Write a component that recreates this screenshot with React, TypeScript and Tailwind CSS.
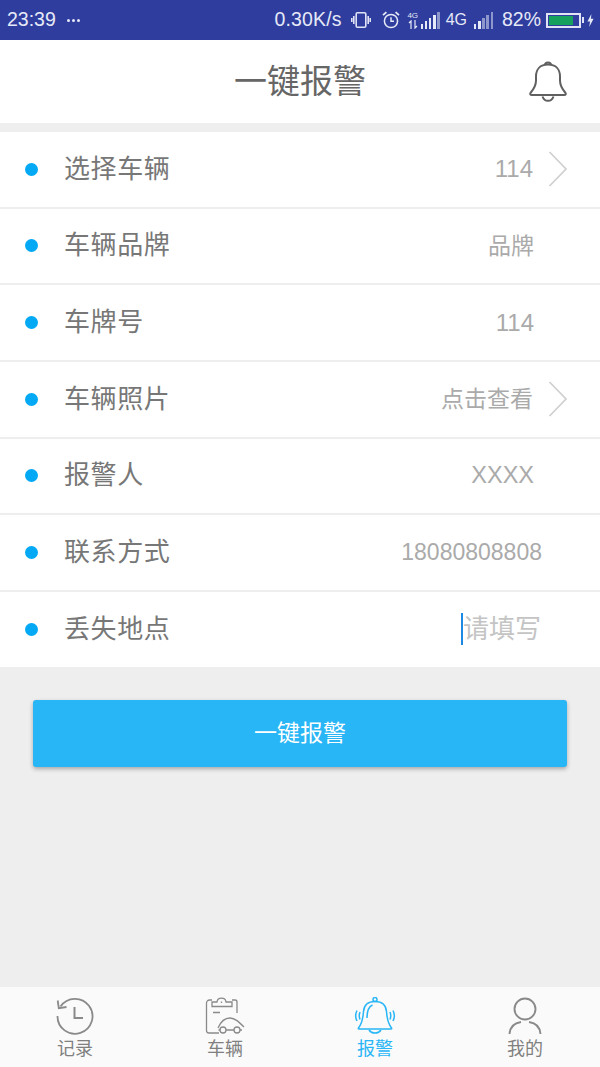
import type { ReactNode } from 'react';

const CJK = "font-['Liberation_Sans','Noto_Sans_CJK_SC',sans-serif]";

function VibrateIcon() {
  return (
    <svg width="20" height="16" viewBox="0 0 20 16" fill="none" stroke="#dfe3f5" strokeWidth="1.6">
      <rect x="5.2" y="0.8" width="9.6" height="14.4" rx="1.2" />
      <path d="M2.8 4v8M0.8 6v4M17.2 4v8M19.2 6v4" />
    </svg>
  );
}

function AlarmIcon() {
  return (
    <svg width="18" height="18" viewBox="0 0 18 18" fill="none" stroke="#e6e9f7" strokeWidth="1.5">
      <circle cx="9" cy="10" r="6.6" />
      <path d="M9 6.2v4h3" />
      <path d="M1 4.2 4.4 1.2M17 4.2 13.6 1.2" strokeWidth="1.8" />
    </svg>
  );
}

function Signal({ active }: { active: number }) {
  const bars = [5, 8, 11, 14, 17];
  return (
    <div className="flex items-end gap-[1.75px]">
      {bars.map((h, i) => (
        <div
          key={h}
          className={i < active ? 'w-[2.4px] bg-[#e6e9f7]' : 'w-[2.4px] bg-[#8d97cb]'}
          style={{ height: h }}
        />
      ))}
    </div>
  );
}

function StatusBar() {
  return (
    <div className="flex h-10 items-center bg-[#2f3e9e] pl-[7px] pr-[6px] font-['Liberation_Sans',sans-serif] text-[#e6e9f7]">
      <span className="text-[19.5px]">23:39</span>
      <span className="ml-[11px] flex gap-[2px]">
        <i className="size-[3px] rounded-full bg-[#e6e9f7]" />
        <i className="size-[3px] rounded-full bg-[#e6e9f7]" />
        <i className="size-[3px] rounded-full bg-[#e6e9f7]" />
      </span>
      <div className="ml-auto flex items-center">
        <span className="text-[19.5px] tracking-[0.15px]">0.30K/s</span>
        <span className="ml-[9px] flex"><VibrateIcon /></span>
        <span className="ml-[11px] flex"><AlarmIcon /></span>
        <div className="ml-[8px] flex w-[10px] flex-col items-center">
          <span className="text-[8px] leading-[9px]">4G</span>
          <svg width="10" height="9" viewBox="0 0 10 9" fill="none" stroke="#e6e9f7" strokeWidth="1.2">
            <path d="M3 9V1L1 3M7 0v8l2-2" />
          </svg>
        </div>
        <span className="ml-[3px]"><Signal active={4} /></span>
        <span className="ml-[6px] text-[16px]">4G</span>
        <span className="ml-[7px]"><Signal active={2} /></span>
        <span className="ml-[9px] text-[19.5px]">82%</span>
        <div className="ml-[5px] flex h-[15px] w-[35px] items-center border-2 border-[#dfe3f5] p-[1px]">
          <div className="h-full w-[82%] bg-[#16a05d]" />
        </div>
        <div className="ml-[1px] h-[6px] w-[2px] bg-[#dfe3f5]" />
        <svg className="ml-[3px]" width="7" height="15" viewBox="0 0 8 15" fill="#e6e9f7">
          <path d="M5 0 0.5 8.5h3L2.5 15 7.5 5.5h-3z" />
        </svg>
      </div>
    </div>
  );
}

function HeaderBell() {
  return (
    <svg width="40" height="42" viewBox="0 0 40 42" fill="none" stroke="#606060" strokeWidth="2" strokeLinejoin="round">
      <path d="M17 5c0-3.500 6-3.500 6 0" />
      <path d="M20 4.500c-8 0-12 5-12 12v4c0 5-1.800 8-5.200 12-1.200 1.300-.5 2.500 1 2.500h32.400c1.500 0 2.200-1.200 1-2.500-3.400-4-5.200-7-5.200-12v-4c0-7-4-12-12-12z" />
      <path d="M14.500 36.500c1 3 2.800 4.300 5.500 4.300s4.500-1.300 5.500-4.300" />
    </svg>
  );
}

function Chevron() {
  return (
    <svg width="20" height="36" viewBox="0 0 20 36" fill="none" stroke="#cfcfcf" strokeWidth="1.7">
      <path d="M1.500 1 18 18 1.500 35" />
    </svg>
  );
}

type RowData = { label: string; value: string; chevron?: boolean; pr: string; size: string };

const rows: RowData[] = [
  { label: '选择车辆', value: '114', chevron: true, pr: 'pr-[32px]', size: 'text-[24px]' },
  { label: '车辆品牌', value: '品牌', pr: 'pr-[66px]', size: 'text-[23px]' },
  { label: '车牌号', value: '114', pr: 'pr-[66px]', size: 'text-[24px]' },
  { label: '车辆照片', value: '点击查看', chevron: true, pr: 'pr-[32px]', size: 'text-[23px]' },
  { label: '报警人', value: 'XXXX', pr: 'pr-[66px]', size: 'text-[23.5px]' },
  { label: '联系方式', value: '18080808808', pr: 'pr-[58px]', size: 'text-[23px]' },
];

function Row({ label, right, last }: { label: string; right: ReactNode; last?: boolean }) {
  return (
    <div className={last ? 'flex h-[75px] items-center bg-white' : 'flex h-[76.67px] items-center border-b-2 border-[#eeeeee] bg-white'}>
      <div className="ml-[25px] size-[13px] rounded-full bg-[#03a9f4]" />
      <span className="ml-[26px] text-[26px] tracking-[0.6px] text-[#777777]">{label}</span>
      {right}
    </div>
  );
}

function HistoryIcon() {
  return (
    <svg width="38" height="38" viewBox="0 0 38 38" fill="none" stroke="#8a8a8a" strokeWidth="1.8">
      <path d="M4.500 9.500A17.500 17.500 0 1 1 1.500 19" />
      <path d="M1.700 3.500 2.800 11.200 10.500 10" />
      <path d="M18.500 10v11h8.500" strokeWidth="2" />
    </svg>
  );
}

function CarClipboardIcon() {
  return (
    <svg width="40" height="38" viewBox="0 0 40 38" fill="none" stroke="#8a8a8a" strokeWidth="1.3">
      <path d="M7 3H4.500a3 3 0 0 0-3 3v27.500A2.500 2.500 0 0 0 4 36h10" />
      <path d="M27 3h3a2 2 0 0 1 2 2v11" />
      <path d="M7 9.500V5h5c.3-2.500 1.500-3.800 4.500-3.800s4.200 1.300 4.500 3.800h6v4.500z" />
      <path d="M8 15.500h7M16.500 4.500v1.500" />
      <path d="M13 31c3-7 7.500-10 12-10 5 0 9 4 14 9" />
      <circle cx="18" cy="33" r="3" />
      <circle cx="32" cy="33" r="3" />
      <path d="M21 33h8M15 33h-1.500M35 33h2" />
    </svg>
  );
}

function RingingBellIcon() {
  return (
    <svg width="42" height="38" viewBox="0 0 42 38" fill="none" stroke="#29b6f6" strokeWidth="1.5" strokeLinejoin="round">
      <circle cx="21" cy="2.500" r="2" />
      <path d="M21 4.500c-7 0-11 3.500-11.500 10-.5 7-1.500 12-5 16.500-.4.500-.2 1 .5 1h32c.7 0 .9-.5.500-1-3.500-4.500-4.500-9.500-5-16.500-.5-6.500-4.500-10-11.500-10z" />
      <path d="M13 21c0-5 .5-11 5.500-13" />
      <path d="M15 33c1.300 2 3.500 3 6 3s4.700-1 6-3" />
      <path d="M6 15c-1 2.500-1 5 0 7.500M3 13.500c-1.800 3.500-1.800 7 0 10.500M36 15c1 2.500 1 5 0 7.500M39 13.500c1.800 3.500 1.800 7 0 10.500" />
    </svg>
  );
}

function PersonIcon() {
  return (
    <svg width="34" height="38" viewBox="0 0 34 38" fill="none" stroke="#8a8a8a" strokeWidth="1.9">
      <circle cx="17" cy="12" r="10.500" />
      <path d="M1.500 37C2 30 6 26 13 25M32.500 37C32 30 28 26 21 25" />
    </svg>
  );
}

const tabs = [
  { label: '记录', icon: <HistoryIcon />, active: false },
  { label: '车辆', icon: <CarClipboardIcon />, active: false },
  { label: '报警', icon: <RingingBellIcon />, active: true },
  { label: '我的', icon: <PersonIcon />, active: false },
];

export default function App() {
  return (
    <div className={`flex h-[1067px] w-[600px] flex-col overflow-hidden bg-[#eeeeee] ${CJK}`}>
      <StatusBar />

      <div className="relative flex h-[83px] items-center justify-center bg-white">
        <h1 className="text-[33px] font-normal text-[#666666]">一键报警</h1>
        <div className="absolute right-[32px] top-[20px]"><HeaderBell /></div>
      </div>

      <div className="mt-[9px]">
        {rows.map((r) => (
          <Row
            key={r.label}
            label={r.label}
            right={
              <div className={`ml-auto flex items-center ${r.pr}`}>
                <span className={`${r.size} text-[#aaaaaa]`}>{r.value}</span>
                {r.chevron && <span className="ml-[15px] flex"><Chevron /></span>}
              </div>
            }
          />
        ))}
        <Row
          label="丢失地点"
          last
          right={
            <div className="ml-auto flex items-center pr-[59px]">
              <div className="h-[32px] w-[2px] bg-[#1e88e5]" />
              <span className="text-[26px] text-[#c4c4c4]">请填写</span>
            </div>
          }
        />
      </div>

      <div className="px-[33px] pt-[33px]">
        <button className="flex h-[67px] w-full items-center justify-center rounded-[3px] bg-[#29b6f6] text-[23px] text-white shadow-[0_2px_4px_rgba(0,0,0,0.3)]">
          一键报警
        </button>
      </div>

      <nav className="mt-auto grid h-[80px] grid-cols-4 bg-[#fafafa]">
        {tabs.map((t) => (
          <div key={t.label} className="flex flex-col items-center pt-[10px]">
            <div className="flex h-[38px] items-center">{t.icon}</div>
            <span className={t.active ? 'mt-[3px] text-[18px] leading-[22px] text-[#29b6f6]' : 'mt-[3px] text-[18px] leading-[22px] text-[#808080]'}>
              {t.label}
            </span>
          </div>
        ))}
      </nav>
    </div>
  );
}
